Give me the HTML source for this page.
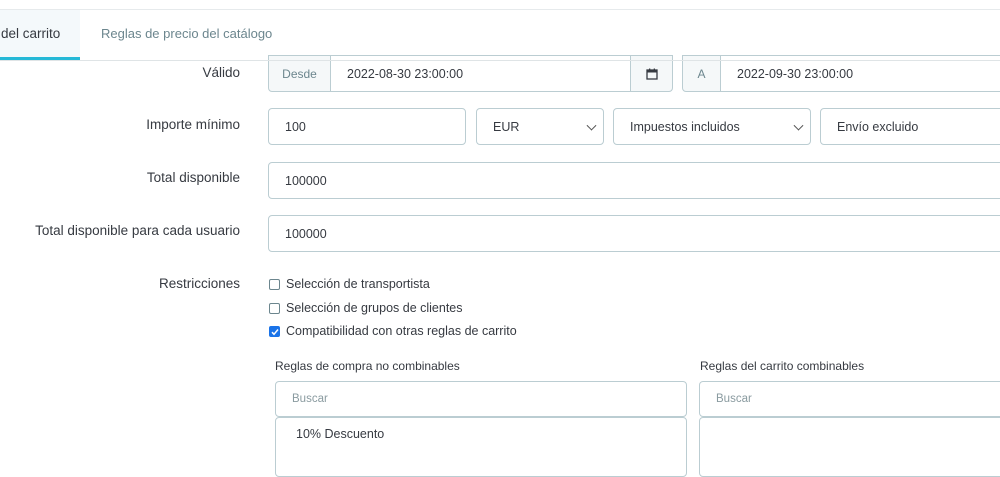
<!DOCTYPE html>
<html><head><meta charset="utf-8"><style>
*{box-sizing:border-box;margin:0;padding:0}
body{width:1000px;height:466px;overflow:hidden;background:#fff;font-family:"Liberation Sans",sans-serif;color:#363a41;position:relative;font-size:12px}
.a{position:absolute}
.box{position:absolute;border:1px solid #bbcdd2;border-radius:4px;background:#fff;display:flex;align-items:center;padding-left:16px;font-size:12.5px;color:#363a41}
.lbl{position:absolute;right:760px;font-size:13.5px;color:#363a41;text-align:right;white-space:nowrap}
.add{position:absolute;background:#f5f8f9;border:1px solid #bbcdd2;display:flex;align-items:center;justify-content:center;font-size:12px;color:#6c868e}
.chev{position:absolute;right:8px;top:50%;width:7px;height:7px;border-right:1.5px solid #555;border-bottom:1.5px solid #555;transform:translateY(-70%) rotate(45deg)}
.cb{position:absolute;left:269px;width:11px;height:11px;border:1px solid #6c868e;border-radius:2px;background:#fff}
.ct{position:absolute;left:286px;font-size:12.5px;color:#363a41}
</style></head><body>
<div class="a" style="left:0;top:9px;width:1000px;height:1px;background:#e6eaec"></div>
<div class="a" style="left:0;top:10px;width:80px;height:50px;background:#f4f9fb"></div>
<div class="a" style="left:0;top:57px;width:80px;height:3px;background:#25b9d7"></div>
<div class="a" style="left:1px;top:26px;font-size:13.5px;color:#363a41">del carrito</div>
<div class="a" style="left:101px;top:26px;font-size:13px;color:#6c868e">Reglas de precio del catálogo</div>

<div class="lbl" style="top:65px">Válido</div>
<div class="add" style="left:268px;top:55px;width:63px;height:37px;border-radius:0 0 0 4px">Desde</div>
<div class="box" style="left:330px;top:55px;width:301px;height:37px;border-radius:0">2022-08-30 23:00:00</div>
<div class="add" style="left:630px;top:55px;width:43px;height:37px;border-radius:0 0 4px 0">
<svg width="12" height="12" viewBox="0 0 12 12"><rect x="1" y="2" width="10" height="9" fill="none" stroke="#363a41" stroke-width="1.3"/><rect x="1" y="2" width="10" height="2.5" fill="#363a41"/><rect x="3" y="0.5" width="1.3" height="2.5" fill="#363a41"/><rect x="7.7" y="0.5" width="1.3" height="2.5" fill="#363a41"/></svg></div>
<div class="add" style="left:682px;top:55px;width:39px;height:37px;border-radius:0 0 0 4px">A</div>
<div class="box" style="left:720px;top:55px;width:290px;height:37px;border-radius:0">2022-09-30 23:00:00</div>
<div class="a" style="left:0;top:60px;width:1000px;height:1px;background:#dfe4e6"></div>

<div class="lbl" style="top:117px">Importe mínimo</div>
<div class="box" style="left:268px;top:108px;width:198px;height:37px">100</div>
<div class="box" style="left:476px;top:108px;width:128px;height:37px">EUR<span class="chev"></span></div>
<div class="box" style="left:613px;top:108px;width:198px;height:37px">Impuestos incluidos<span class="chev"></span></div>
<div class="box" style="left:820px;top:108px;width:190px;height:37px">Envío excluido</div>

<div class="lbl" style="top:170px">Total disponible</div>
<div class="box" style="left:268px;top:162px;width:742px;height:37px">100000</div>
<div class="lbl" style="top:223px">Total disponible para cada usuario</div>
<div class="box" style="left:268px;top:215px;width:742px;height:37px">100000</div>

<div class="lbl" style="top:276px">Restricciones</div>
<div class="cb" style="top:279px"></div><div class="ct" style="top:277px">Selección de transportista</div>
<div class="cb" style="top:303px"></div><div class="ct" style="top:301px">Selección de grupos de clientes</div>
<div class="cb" style="top:326px;background:#1a73e8;border-color:#1a73e8"><svg class="a" style="left:1px;top:1px" width="8" height="8" viewBox="0 0 8 8"><path d="M1 4.2 L3 6.3 L7 1.5" fill="none" stroke="#fff" stroke-width="1.5"/></svg></div>
<div class="ct" style="top:324px">Compatibilidad con otras reglas de carrito</div>

<div class="a" style="left:275px;top:359px;font-size:12px">Reglas de compra no combinables</div>
<div class="box" style="left:275px;top:381px;width:412px;height:36px;color:#8a9ba0;font-size:11.5px">Buscar</div>
<div class="box" style="left:275px;top:417px;width:412px;height:60px;align-items:flex-start;padding-top:9px;padding-left:20px">10% Descuento</div>
<div class="a" style="left:700px;top:359px;font-size:12px">Reglas del carrito combinables</div>
<div class="box" style="left:699px;top:381px;width:320px;height:36px;color:#8a9ba0;font-size:11.5px">Buscar</div>
<div class="box" style="left:699px;top:417px;width:320px;height:60px"></div>
</body></html>
